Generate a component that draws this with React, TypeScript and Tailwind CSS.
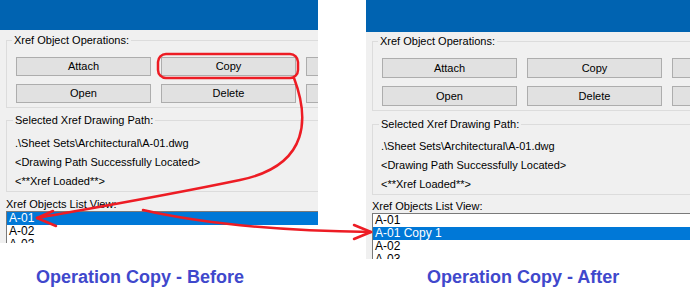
import React from 'react'

type Variant = 'before' | 'after'

interface IXrefPanelProps {
	variant: Variant
	items: string[]
	selected: string
}

const buttonLabels = ['Attach', 'Copy', '', 'Open', 'Delete', '']

function XrefPanel({ variant, items, selected }: IXrefPanelProps) {
	const after = variant === 'after'

	return (
		<div
			className={`flex flex-col overflow-hidden bg-[#f0f0f0] text-[11px] text-black ${
				after ? 'h-[259px] w-[324px]' : 'h-[243px] w-[318px]'
			}`}
		>
			{/* Title bar */}
			<div className={`shrink-0 bg-[#0063b1] ${after ? 'h-[32px]' : 'h-[30px]'}`} />

			{/* Operations group */}
			<fieldset
				className={`ml-[6px] w-[420px] shrink-0 border border-[#dcdcdc] pt-[10px] pb-[4px] pl-[9px] ${
					after ? 'mt-[2px]' : 'mt-[3px]'
				}`}
			>
				<legend className="ml-[-4px] px-[2px] leading-[14px]">Xref Object Operations:</legend>
				<div className="grid grid-cols-[135px_135px_135px] gap-x-[10px] gap-y-[8px]">
					{buttonLabels.map((label, i) => (
						<button
							key={i}
							type="button"
							className={`border border-[#adadad] bg-[#e1e1e1] leading-none text-black ${
								after ? 'h-[20px]' : 'h-[19px]'
							}`}
						>
							{label}
						</button>
					))}
				</div>
			</fieldset>

			{/* Path group */}
			<fieldset
				className={`ml-[6px] w-[420px] shrink-0 border border-[#dcdcdc] pl-[8px] ${
					after ? 'mt-[6px] pt-[6px]' : 'mt-[5px] pt-[7px]'
				}`}
			>
				<legend className="ml-[-2px] px-[2px] leading-[14px]">Selected Xref Drawing Path:</legend>
				<div className="leading-[19px]">{'.\\Sheet Sets\\Architectural\\A-01.dwg'}</div>
				<div className="leading-[19px]">{'<Drawing Path Successfully Located>'}</div>
				<div className="leading-[19px]">{'<**Xref Loaded**>'}</div>
			</fieldset>

			{/* List view */}
			<div className={`ml-[6px] shrink-0 leading-[13px] ${after ? 'mt-[5px]' : 'mt-[6px]'}`}>
				Xref Objects List View:
			</div>
			<div className="ml-[6px] w-[420px] grow border border-[#7a7a7a] bg-white text-[12px] leading-[13px]">
				{items.map((item) => (
					<div
						key={item}
						className={`pl-[2px] ${item === selected ? 'bg-[#0078d7] text-white' : 'text-black'}`}
					>
						{item}
					</div>
				))}
			</div>
		</div>
	)
}

export default function App() {
	return (
		<div className="relative h-[291px] w-[690px] overflow-hidden bg-white font-['Liberation_Sans',Arial,sans-serif]">
			<div className="grid grid-cols-[318px_324px] grid-rows-[268px_18px] gap-x-[48px]">
				<div className="self-start">
					<XrefPanel variant="before" items={['A-01', 'A-02', 'A-03']} selected="A-01" />
				</div>
				<div className="self-start">
					<XrefPanel
						variant="after"
						items={['A-01', 'A-01 Copy 1', 'A-02', 'A-03']}
						selected="A-01 Copy 1"
					/>
				</div>
				<div className="pl-[36px] text-[18px] font-bold leading-[18px] text-[#3f48cc]">
					Operation Copy - Before
				</div>
				<div className="pl-[61px] text-[18px] font-bold leading-[18px] text-[#3f48cc]">
					Operation Copy - After
				</div>
			</div>

			{/* Hand-drawn red annotation */}
			<svg
				className="pointer-events-none absolute inset-0"
				width="690"
				height="291"
				viewBox="0 0 690 291"
				fill="none"
				stroke="#ed1c24"
				strokeWidth="2.5"
				strokeLinecap="round"
				strokeLinejoin="round"
			>
				<rect x="158" y="54" width="140" height="24" rx="8" />
				<path d="M294 78 C308 115 312 165 240 180 S110 205 37 218" />
				<path d="M53 211 L37 218 L56 226" />
				<path d="M143 210 Q230 230 371 232" />
				<path d="M354 225 L371 232 L354 239" />
			</svg>
		</div>
	)
}
